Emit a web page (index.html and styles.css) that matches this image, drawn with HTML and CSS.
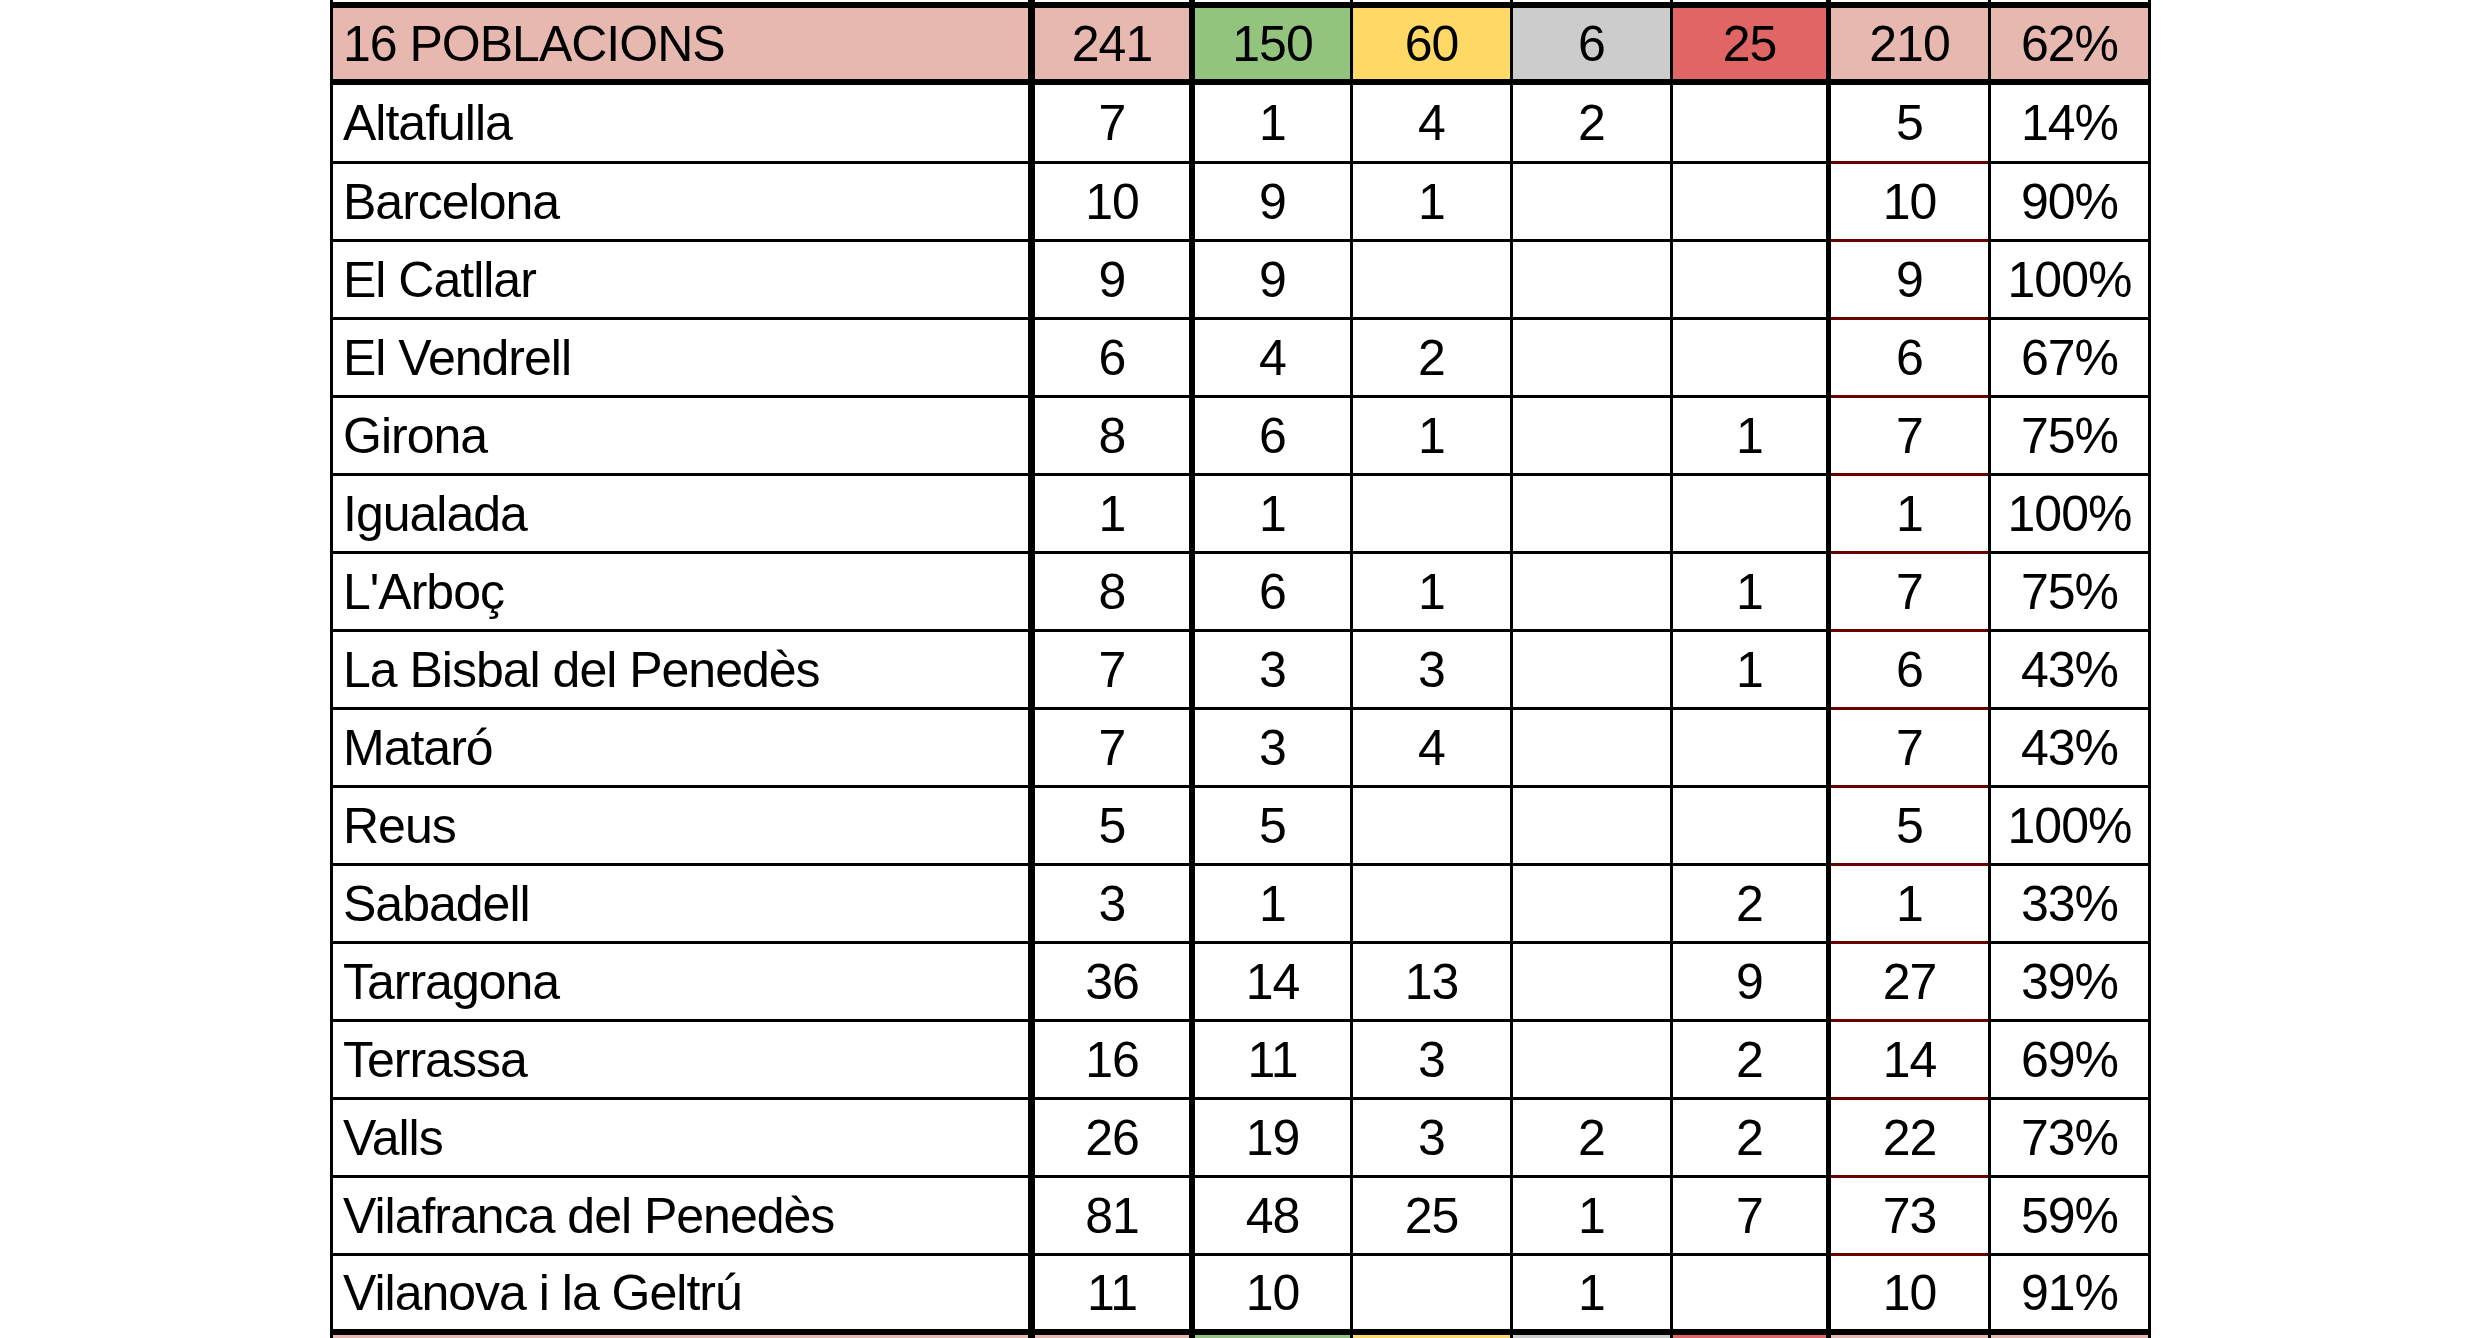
FILE: index.html
```html
<!DOCTYPE html>
<html lang="ca">
<head>
<meta charset="utf-8">
<title>16 Poblacions</title>
<link rel="stylesheet" href="styles.css">
</head>
<body>
<div class="sheet">
  <div class="row peek-top"><div></div><div></div><div></div><div></div><div></div><div></div><div></div><div></div></div>
  <div class="row head">
    <div class="name pink">16 POBLACIONS</div><div class="pink">241</div><div class="green">150</div><div class="yellow">60</div><div class="grey">6</div><div class="red">25</div><div class="pink">210</div><div class="pink">62%</div>
  </div>
  <div class="row data first"><div class="name">Altafulla</div><div>7</div><div>1</div><div>4</div><div>2</div><div></div><div>5</div><div>14%</div></div>
  <div class="row data"><div class="name">Barcelona</div><div>10</div><div>9</div><div>1</div><div></div><div></div><div>10</div><div>90%</div></div>
  <div class="row data"><div class="name">El Catllar</div><div>9</div><div>9</div><div></div><div></div><div></div><div>9</div><div>100%</div></div>
  <div class="row data"><div class="name">El Vendrell</div><div>6</div><div>4</div><div>2</div><div></div><div></div><div>6</div><div>67%</div></div>
  <div class="row data"><div class="name">Girona</div><div>8</div><div>6</div><div>1</div><div></div><div>1</div><div>7</div><div>75%</div></div>
  <div class="row data"><div class="name">Igualada</div><div>1</div><div>1</div><div></div><div></div><div></div><div>1</div><div>100%</div></div>
  <div class="row data"><div class="name">L'Arboç</div><div>8</div><div>6</div><div>1</div><div></div><div>1</div><div>7</div><div>75%</div></div>
  <div class="row data"><div class="name">La Bisbal del Penedès</div><div>7</div><div>3</div><div>3</div><div></div><div>1</div><div>6</div><div>43%</div></div>
  <div class="row data"><div class="name">Mataró</div><div>7</div><div>3</div><div>4</div><div></div><div></div><div>7</div><div>43%</div></div>
  <div class="row data"><div class="name">Reus</div><div>5</div><div>5</div><div></div><div></div><div></div><div>5</div><div>100%</div></div>
  <div class="row data"><div class="name">Sabadell</div><div>3</div><div>1</div><div></div><div></div><div>2</div><div>1</div><div>33%</div></div>
  <div class="row data"><div class="name">Tarragona</div><div>36</div><div>14</div><div>13</div><div></div><div>9</div><div>27</div><div>39%</div></div>
  <div class="row data"><div class="name">Terrassa</div><div>16</div><div>11</div><div>3</div><div></div><div>2</div><div>14</div><div>69%</div></div>
  <div class="row data"><div class="name">Valls</div><div>26</div><div>19</div><div>3</div><div>2</div><div>2</div><div>22</div><div>73%</div></div>
  <div class="row data"><div class="name">Vilafranca del Penedès</div><div>81</div><div>48</div><div>25</div><div>1</div><div>7</div><div>73</div><div>59%</div></div>
  <div class="row data last"><div class="name">Vilanova i la Geltrú</div><div>11</div><div>10</div><div></div><div>1</div><div></div><div>10</div><div>91%</div></div>
  <div class="row peek-bottom">
    <div class="pink"></div><div class="pink"></div><div class="green"></div><div class="yellow"></div><div class="grey"></div><div class="red"></div><div class="pink"></div><div class="pink"></div>
  </div>
</div>
</body>
</html>
```

FILE: styles.css
```css
html, body {
  margin: 0;
  padding: 0;
  background: #ffffff;
  overflow: hidden;
}

body {
  font-family: "Liberation Sans", Arial, sans-serif;
  color: #000000;
}

.sheet {
  display: grid;
  width: max-content;
  grid-template-columns: 702px 160px 158px 160px 160px 158px 160px 160px;
  margin-left: 330px;
  padding-left: 3px;
  background: #000000;
}

.row {
  display: contents;
}

.row > div {
  background: #ffffff;
  display: flex;
  align-items: center;
  justify-content: center;
  font-size: 50px;
  letter-spacing: -1px;
  line-height: 1;
  white-space: nowrap;
  overflow: hidden;
}

/* vertical rules: width of the black line to the right of each column */
.row > div:nth-child(1) { margin-right: 7px; }
.row > div:nth-child(2) { margin-right: 6px; }
.row > div:nth-child(3) { margin-right: 3px; }
.row > div:nth-child(4) { margin-right: 3px; }
.row > div:nth-child(5) { margin-right: 3px; }
.row > div:nth-child(6) { margin-right: 5px; }
.row > div:nth-child(7) { margin-right: 3px; }
.row > div:nth-child(8) { margin-right: 3px; }

.row > .name {
  justify-content: flex-start;
  padding-left: 10px;
}

.peek-top > div {
  height: 2px;
  margin-bottom: 6px;
}

.head > div {
  height: 71px;
  margin-bottom: 6px;
}

.data > div {
  height: 75px;
  margin-bottom: 3px;
}

.data.first > div {
  height: 76px;
}

.data > div:nth-child(7) {
  margin-bottom: 0;
  border-bottom: 3px solid #6b0000;
}

.data.last > div {
  height: 73px;
  margin-bottom: 6px;
}

.data.last > div:nth-child(7) {
  border-bottom: 0;
  margin-bottom: 6px;
}

.peek-bottom > div {
  height: 20px;
}

.row > .pink { background: #e6b8af; }
.row > .green { background: #93c47d; }
.row > .yellow { background: #ffd966; }
.row > .grey { background: #cccccc; }
.row > .red { background: #e06666; }
```
